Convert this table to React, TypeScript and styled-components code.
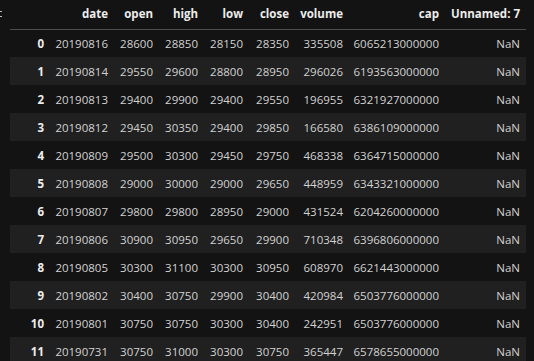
import React from 'react'
import styled, { createGlobalStyle } from 'styled-components'

type Row = [number, string, string, string, string, string, string, string]

const columns = ['', 'date', 'open', 'high', 'low', 'close', 'volume', 'cap', 'Unnamed: 7']
const widths = [40, 64, 45, 45, 45, 46, 54, 96, 81]

const rows: Row[] = [
  [0, '20190816', '28600', '28850', '28150', '28350', '335508', '6065213000000'],
  [1, '20190814', '29550', '29600', '28800', '28950', '296026', '6193563000000'],
  [2, '20190813', '29400', '29900', '29400', '29550', '196955', '6321927000000'],
  [3, '20190812', '29450', '30350', '29400', '29850', '166580', '6386109000000'],
  [4, '20190809', '29500', '30300', '29450', '29750', '468338', '6364715000000'],
  [5, '20190808', '29000', '30000', '29000', '29650', '448959', '6343321000000'],
  [6, '20190807', '29800', '29800', '28950', '29000', '431524', '6204260000000'],
  [7, '20190806', '30900', '30950', '29650', '29900', '710348', '6396806000000'],
  [8, '20190805', '30300', '31100', '30300', '30950', '608970', '6621443000000'],
  [9, '20190802', '30400', '30750', '29900', '30400', '420984', '6503776000000'],
  [10, '20190801', '30750', '30750', '30300', '30400', '242951', '6503776000000'],
  [11, '20190731', '30750', '31000', '30300', '30750', '365447', '6578655000000'],
]

const GlobalStyle = createGlobalStyle`
  html, body {
    margin: 0;
    padding: 0;
    background: #131313;
  }
  body {
    font-family: 'Segoe UI', 'Open Sans', 'Noto Sans', sans-serif;
    font-size: 11.5px;
    color: #d2d2d2;
  }
`

export default function App() {
  return (
    <React.Fragment>
      <GlobalStyle />
      <Page>
        <Gutter>
          {/* clipped output-toolbar mark at the far left edge */}
          <GutterMark />
        </Gutter>
        <Frame>
          <Table>
            <colgroup>
              {widths.map((w, i) => (
                <col key={i} style={{ width: w }} />
              ))}
            </colgroup>
            <thead>
              <HeadRow>
                {columns.map((c, i) => (
                  <HeadCell key={i}>{c}</HeadCell>
                ))}
              </HeadRow>
            </thead>
            <tbody>
              {rows.map((r) => (
                <BodyRow key={r[0]} striped={r[0] % 2 === 1}>
                  <IndexCell>{r[0]}</IndexCell>
                  {r.slice(1).map((v, i) => (
                    <Cell key={i}>{v}</Cell>
                  ))}
                  <Cell>NaN</Cell>
                </BodyRow>
              ))}
            </tbody>
          </Table>
        </Frame>
      </Page>
    </React.Fragment>
  )
}

const Page = styled.div`
  display: flex;
  height: 361px;
  overflow: hidden;
`

const Gutter = styled.div`
  width: 10px;
  flex: 0 0 10px;
  padding-top: 11px;
  box-sizing: border-box;
`

const GutterMark = styled.div`
  width: 2px;
  height: 4px;
  border-top: 1px solid #bdbdbd;
  border-bottom: 1px solid #bdbdbd;
`

const Frame = styled.div`
  width: 516px;
  flex: 0 0 516px;
`

const Table = styled.table`
  table-layout: fixed;
  width: 516px;
  border-collapse: collapse;
  border-spacing: 0;
`

const HeadRow = styled.tr`
  height: 29px;
  border-bottom: 1px solid #4c4c4c;
`

const HeadCell = styled.th`
  padding: 0 6px 1px 0;
  text-align: right;
  font-weight: 700;
  color: #ececec;
  white-space: nowrap;
  vertical-align: middle;
`

const BodyRow = styled.tr<{ striped: boolean }>`
  height: 28px;
  background: ${(p) => (p.striped ? '#202020' : 'transparent')};
`

const Cell = styled.td`
  padding: 0 6px 0 0;
  text-align: right;
  white-space: nowrap;
  vertical-align: middle;
  color: #d2d2d2;
`

const IndexCell = styled(Cell)`
  font-weight: 700;
  color: #ececec;
`
